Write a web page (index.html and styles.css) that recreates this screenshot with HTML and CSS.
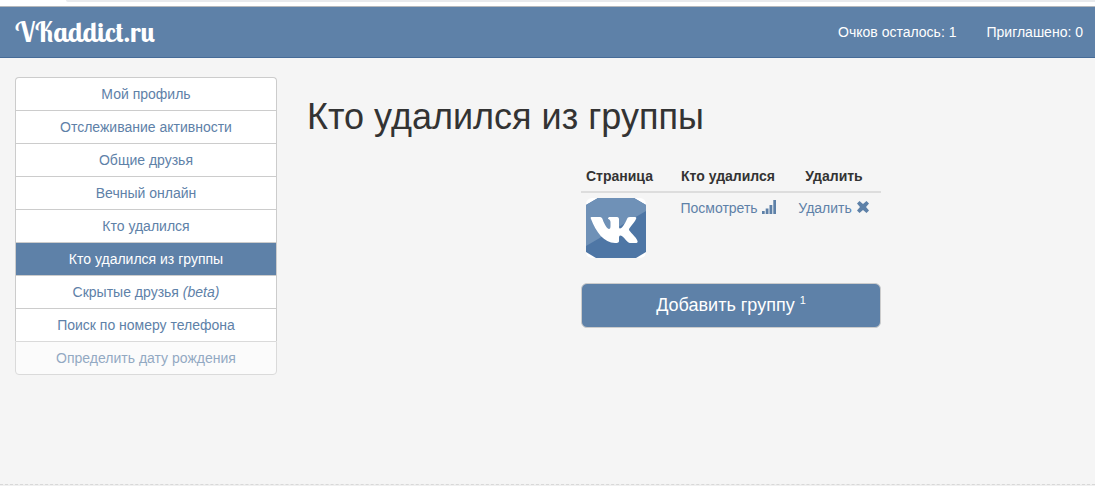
FILE: index.html
```html
<!DOCTYPE html>
<html lang="ru">
<head>
  <meta charset="UTF-8">
  <title>VKaddict.ru</title>
  <link rel="stylesheet" href="styles.css">
</head>
<body>
  <div class="browser-edge"></div>

  <!-- Шапка -->
  <header class="navbar">
    <a class="brand" href="#">VKaddict.ru</a>
    <div class="stats">
      <span>Очков осталось: 1</span>
      <span>Приглашено: 0</span>
    </div>
  </header>

  <div class="container">
    <!-- Меню -->
    <nav class="menu">
      <a href="#">Мой профиль</a>
      <a href="#">Отслеживание активности</a>
      <a href="#">Общие друзья</a>
      <a href="#">Вечный онлайн</a>
      <a href="#">Кто удалился</a>
      <a class="active" href="#">Кто удалился из группы</a>
      <a href="#">Скрытые друзья <i>(beta)</i></a>
      <a href="#">Поиск по номеру телефона</a>
      <a class="disabled" href="#">Определить дату рождения</a>
    </nav>

    <main class="content">
      <h1>Кто удалился из группы</h1>

      <div class="groups">
        <div class="groups-inner">
          <table class="table">
            <thead>
              <tr>
                <th class="col-page">Страница</th>
                <th class="col-gone">Кто удалился</th>
                <th class="col-delete">Удалить</th>
              </tr>
            </thead>
            <tbody>
              <tr>
                <td class="col-page">
                  <a href="#" aria-label="VK">
                    <svg class="avatar" viewBox="0 0 60 60">
                      <rect width="60" height="60" fill="#fff"/>
                      <path d="M12 0H48L60 7V54L50 60H10L0 54V7Z" fill="#4e76a5"/>
                      <path d="M12 0H48L60 7V13L0 48V7Z" fill="#6f91b7"/>
                      <path d="M5.500 19H14C15.500 19 16 20 16.500 21C18.500 27 21.500 31 23 31C24 31 24.500 30 24.500 28V24C24.500 21.500 22 21 22 20.500C22 19.500 23 19 24 19H31C32.500 19 33 20 33 21.500V28.500C33 30 33.500 30.500 34 30.500C36 30.500 39 25.500 41 21C41.500 19.700 42 19 44 19H49C50.500 19 50.500 20 50 21C48.500 24.500 43 30 43 31.500C43 33.500 50.500 39 51.500 43C52 44.500 51 45 49.500 45H44C41.500 45 38 38.500 34.500 37.500C33 37.500 33 39 33 41V43C33 44.500 32 45 29 45C18 45 10 34 5 21C4.500 19.700 4.500 19 5.500 19Z" fill="#fff"/>
                    </svg>
                  </a>
                </td>
                <td class="col-gone">
                  <a href="#">Посмотреть
                    <svg class="icon" viewBox="0 0 14 14"><path d="M0 11h2.700v3H0zM3.700 8.500h2.800v5.500H3.700zM7.500 5h2.800v9H7.500zM11.300 0H14v14h-2.700z"/></svg></a>
                </td>
                <td class="col-delete">
                  <a href="#">Удалить
                    <svg class="icon" viewBox="0 0 14 14"><path d="M3.500 1L7 4L10.500 1L13 3.500L10 7L13 10.500L10.500 13L7 10L3.500 13L1 10.500L4 7L1 3.500Z"/></svg></a>
                </td>
              </tr>
            </tbody>
          </table>

          <button class="btn" type="button">Добавить группу <sup>1</sup></button>
        </div>
      </div>
    </main>
  </div>

  <footer class="footer"></footer>
</body>
</html>
```
FILE: styles.css
```css
* { box-sizing: border-box; }

body {
  display: flex;
  flex-direction: column;
  min-height: 100vh;
  margin: 0;
  font-family: "Liberation Sans", Arial, sans-serif;
  font-size: 14px;
  line-height: 20px;
  color: #333;
  background: #f5f5f5;
}

a {
  color: #5e81a8;
  text-decoration: none;
}

/* Полоска над шапкой */
.browser-edge {
  height: 6px;
  padding-left: 66px;
  background: #fff;
}

.browser-edge::before {
  content: "";
  display: block;
  height: 2px;
  background: #e8eaed;
  border-bottom-left-radius: 4px;
}

/* Шапка */
.navbar {
  display: flex;
  justify-content: space-between;
  align-items: center;
  height: 52px;
  padding: 0 12px 0 15px;
  background: #5e81a8;
  border-top: 1px solid #b5b8bc;
  border-bottom: 1px solid #466b97;
}

.brand {
  font-family: "Lobster Two", Lobster, "Liberation Serif", serif;
  font-size: 28px;
  font-weight: bold;
  line-height: 40px;
  color: #fff;
}

.stats {
  display: flex;
  gap: 30px;
  color: #fff;
}

.container {
  display: grid;
  grid-template-columns: 262px 1fr;
  gap: 30px;
  align-items: start;
  padding: 19px 0 20px 15px;
}

/* Меню */
.menu {
  display: flex;
  flex-direction: column;
}

.menu a {
  padding: 6px 12px;
  text-align: center;
  background: #fff;
  border: 1px solid #ccc;
  border-bottom: 0;
}

.menu a:first-child {
  border-radius: 4px 4px 0 0;
}

.menu a:last-child {
  border-bottom: 1px solid #ccc;
  border-radius: 0 0 4px 4px;
}

.menu .active {
  color: #fff;
  background: #5e81a8;
}

.menu .disabled {
  opacity: 0.65;
}

/* Содержимое */
h1 {
  margin: 20px 0 24px;
  font-size: 36px;
  font-weight: 500;
  line-height: 40px;
}

.groups {
  padding-left: 60px;
}

.groups-inner {
  width: 300px;
  margin: 0 auto;
}

.table {
  width: 100%;
  margin-bottom: 20px;
  border-collapse: separate;
  border-spacing: 0;
  table-layout: fixed;
}

.table th,
.table td {
  padding: 5px;
  text-align: center;
  vertical-align: top;
  white-space: nowrap;
}

.table th {
  border-bottom: 2px solid #ddd;
}

.table .col-page {
  width: 88px;
  text-align: left;
}

.table .col-gone {
  width: 118px;
}

.avatar {
  display: block;
  width: 60px;
  height: 60px;
  border-radius: 6px;
}

.icon {
  width: 14px;
  height: 14px;
  fill: #5e81a8;
  vertical-align: -1px;
}

.btn {
  display: block;
  width: 100%;
  padding: 10px 16px;
  font-family: inherit;
  font-size: 18px;
  line-height: 23px;
  color: #fff;
  background: #5e81a8;
  border: 1px solid #ccc;
  border-radius: 6px;
  cursor: pointer;
}

.btn sup {
  font-size: 11px;
  line-height: 0;
}

.footer {
  height: 2px;
  margin-top: auto;
  background: #f0f0f0;
  border-top: 1px dashed #d8d8d8;
}
```
